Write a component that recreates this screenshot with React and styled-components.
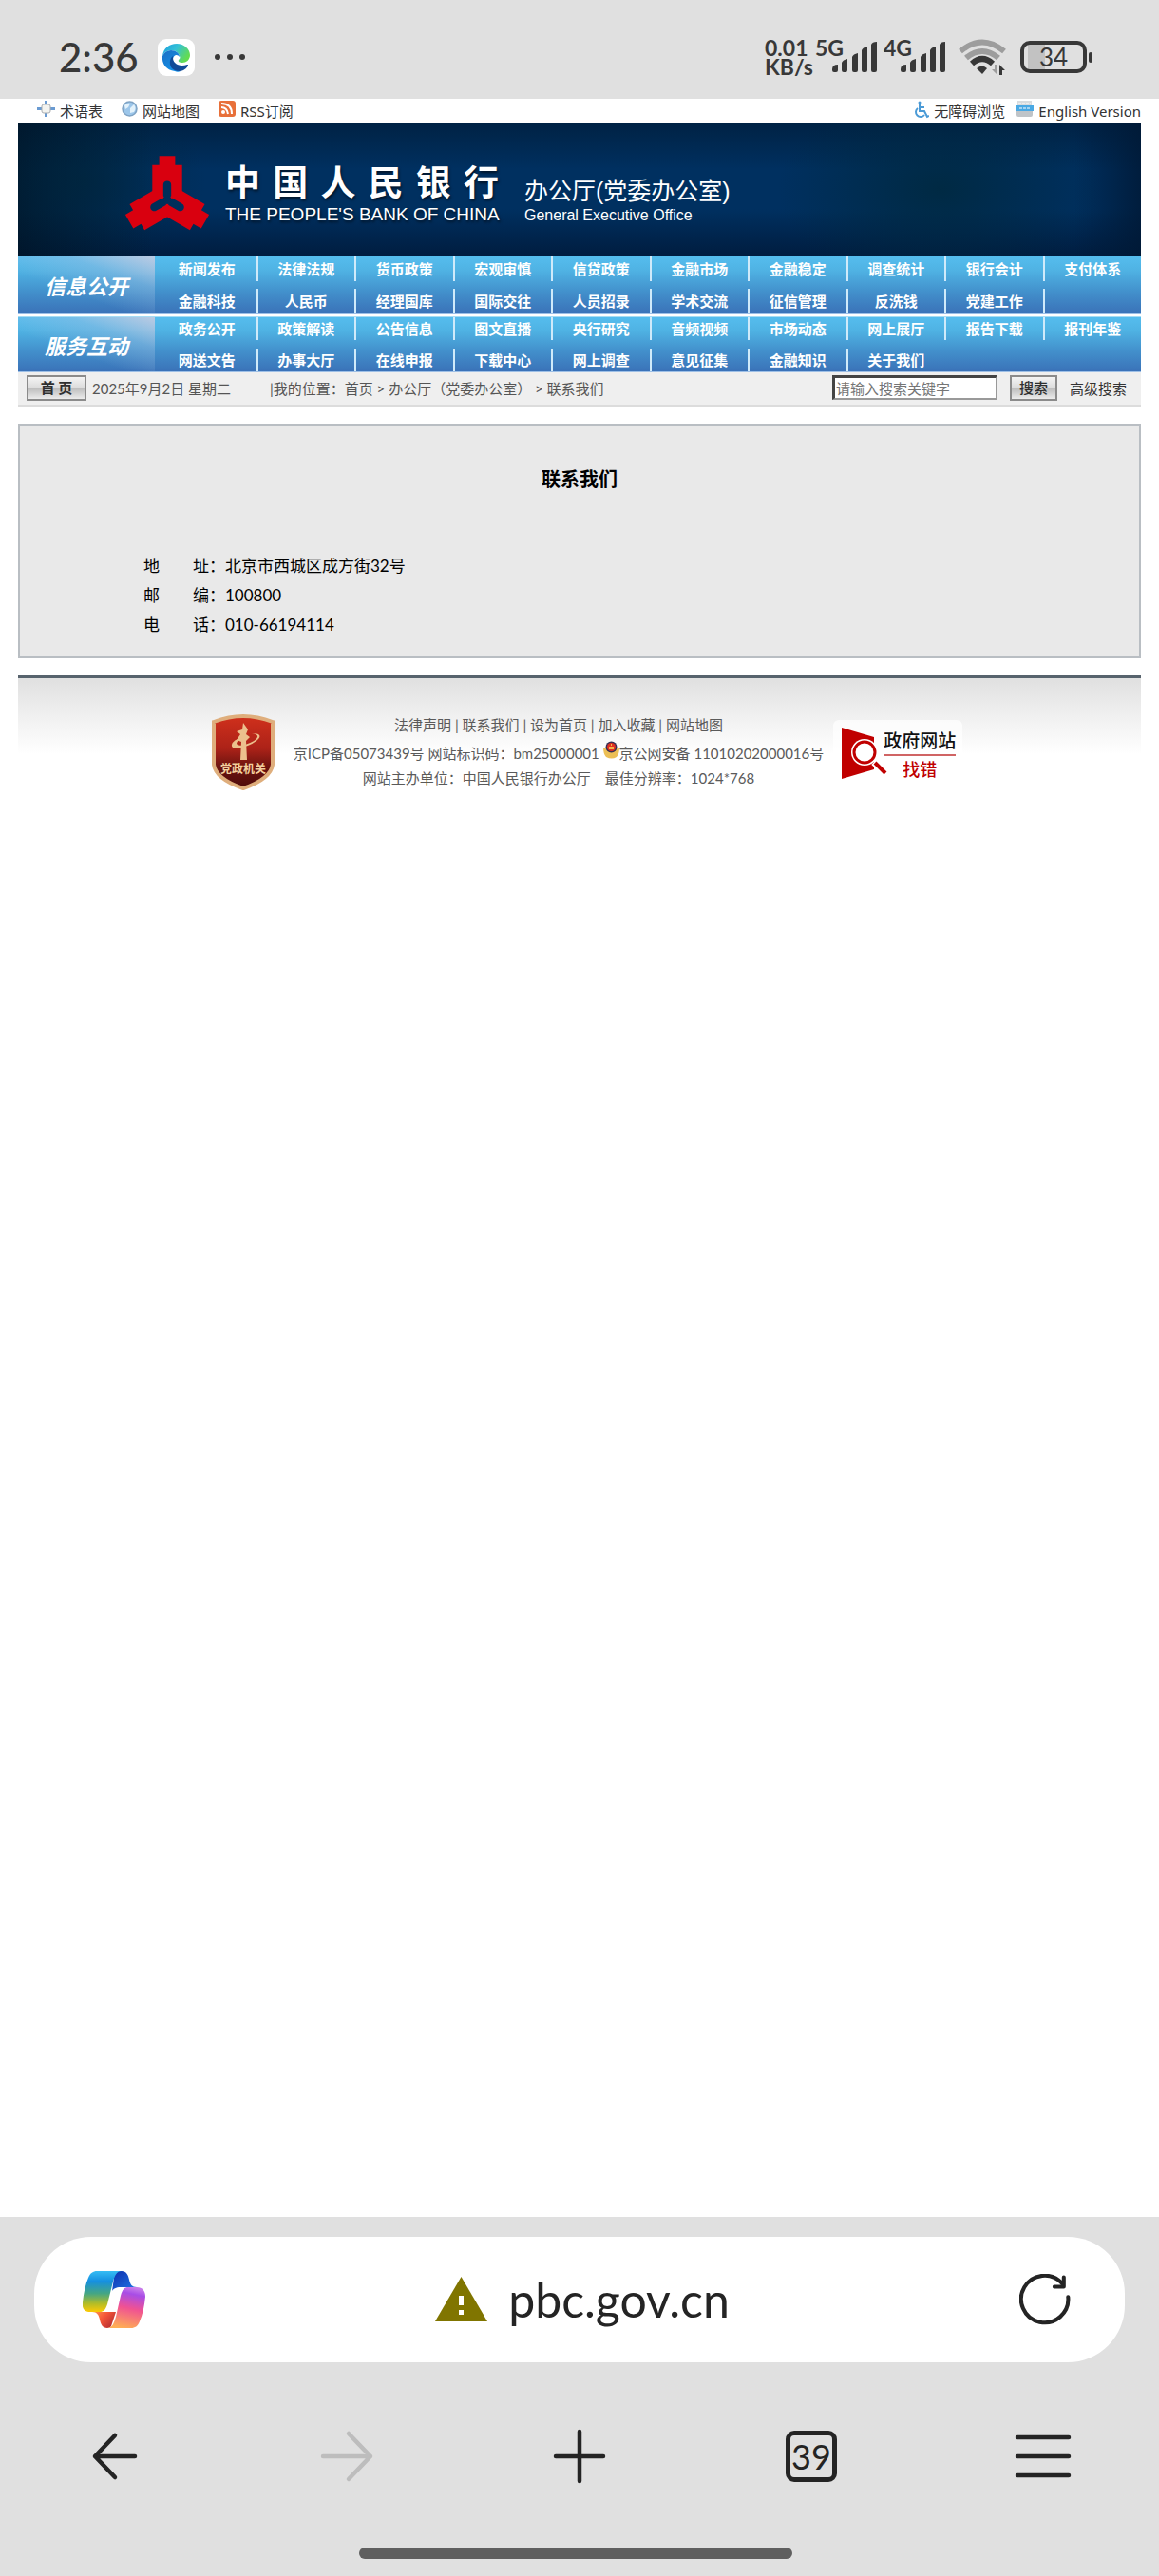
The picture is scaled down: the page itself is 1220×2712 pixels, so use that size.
import React from "react";
import styled, { createGlobalStyle } from "styled-components";

const GlobalStyle = createGlobalStyle`
  * { box-sizing: border-box; }
  body {
    margin: 0;
    background: #fff;
    color: #333;
    font-family: Lato, "Noto Sans CJK SC", sans-serif;
    font-size: 15px;
  }
  a { color: inherit; text-decoration: none; }
  ul, dl, dd, h1, h2, p { margin: 0; padding: 0; list-style: none; }
  button, input { font: inherit; color: inherit; }
  svg { display: block; flex: none; }
`;

const Screen = styled.div`
  min-height: 100vh;
  display: flex;
  flex-direction: column;
`;

/* ---------- phone status bar ---------- */

const StatusBar = styled.header`
  height: 104px;
  padding: 16px 70px 0 62px;
  background: #e0e0e0;
  color: #383838;
  display: flex;
  align-items: center;
  justify-content: space-between;
`;

const StatusGroup = styled.div`
  display: flex;
  align-items: center;
  gap: ${(p) => p.$gap || 0}px;
`;

const Clock = styled.span`
  font-size: 42px;
  line-height: 44px;
  font-weight: 500;
`;

const NetText = styled.span`
  width: ${(p) => p.$width}px;
  height: 40px;
  font-size: 23px;
  line-height: 20px;
  font-weight: 700;
  white-space: nowrap;
`;

const NetLine = styled.span`
  display: block;
`;

const Battery = styled.div`
  width: 70px;
  height: 34px;
  margin-left: 14px;
  border: 4px solid #383838;
  border-radius: 10px;
  background: linear-gradient(to right, transparent 4px, #c2c2c2 4px, #c2c2c2 22px, transparent 22px);
  display: flex;
  align-items: center;
  justify-content: center;
  font-size: 26px;
  line-height: 26px;
`;

const BatteryNub = styled.div`
  width: 4px;
  height: 11px;
  margin-left: 2px;
  border-radius: 2px;
  background: #383838;
`;

/* ---------- site ---------- */

const Site = styled.main`
  flex: 1;
  padding: 0 19px;
`;

const TopLinks = styled.nav`
  height: 25px;
  padding-left: 20px;
  display: flex;
  align-items: flex-start;
  justify-content: space-between;
  font-family: "Noto Sans", "Noto Sans CJK SC", sans-serif;
`;

const LinkGroup = styled.div`
  display: flex;
  gap: ${(p) => p.$gap}px;
`;

const IconLink = styled.a`
  display: flex;
  align-items: flex-start;
  gap: 5px;
  line-height: 26px;
  height: 25px;
  svg { margin-top: 2px; }
`;

const Banner = styled.div`
  height: 140px;
  padding: 35px 0 0 112px;
  display: flex;
  align-items: flex-start;
  color: #fff;
  background:
    radial-gradient(ellipse 130px 90px at 68px 62px, rgba(0, 38, 58, 0.6), transparent),
    radial-gradient(ellipse 170px 110px at 970px 70px, rgba(0, 40, 60, 0.8), transparent),
    linear-gradient(to right, rgba(0, 20, 38, 0.8), transparent 12%, transparent 94%, rgba(0, 24, 52, 0.8)),
    linear-gradient(to bottom, #002244, #003060 35%, #003060 65%, #001d40);
`;

const BankName = styled.div`
  width: 288px;
  margin-left: 16px;
`;

const BankChinese = styled.h1`
  display: flex;
  justify-content: space-between;
  font-family: "Noto Sans CJK SC", sans-serif;
  font-size: 37px;
  line-height: 52px;
  font-weight: 700;
  text-shadow: 1px 2px 3px rgba(0, 0, 0, 0.6);
`;

const BankEnglish = styled.p`
  font-family: "Liberation Sans", sans-serif;
  font-size: 19px;
  line-height: 20px;
  white-space: nowrap;
  text-shadow: 1px 2px 3px rgba(0, 0, 0, 0.6);
`;

const Office = styled.div`
  margin: 21px 0 0 27px;
  font-family: "Liberation Sans", "Noto Sans CJK SC", sans-serif;
`;

const OfficeChinese = styled.p`
  font-size: 25px;
  line-height: 32px;
`;

const OfficeEnglish = styled.p`
  font-size: 16px;
  line-height: 20px;
`;

const NavBand = styled.nav`
  height: ${(p) => p.$height}px;
  border-top: 1px solid #a5dcf5;
  border-bottom: 1px solid #9dbfe6;
  margin-bottom: ${(p) => p.$after || 0}px;
  display: flex;
  color: #fff;
  font-weight: 700;
  background: linear-gradient(to bottom, #55bdee, #4fb2e3 25%, #4392cd 60%, #3a72b8);
`;

const NavTitle = styled.h2`
  width: 144px;
  display: flex;
  align-items: center;
  justify-content: center;
  font-size: 22px;
  font-style: italic;
  background: linear-gradient(200deg, rgba(205, 205, 225, 0.85), rgba(160, 190, 225, 0.4) 30%, transparent 62%);
`;

const NavGrid = styled.ul`
  flex: 1;
  margin-left: 3px;
  display: grid;
  grid-template-columns: repeat(10, 1fr);
  align-content: space-between;
`;

const NavCell = styled.li`
  height: ${(p) => p.$height}px;
  border-left: ${(p) => (p.$divider ? "2px solid #cfeafa" : "0")};
  display: flex;
  align-items: center;
  justify-content: center;
  line-height: 24px;
`;

const ToolBar = styled.div`
  height: 36px;
  padding: 0 15px 2px 9px;
  background: #efefef;
  border-bottom: 2px solid #dcdcdc;
  display: flex;
  align-items: center;
  color: #555;
  white-space: nowrap;
`;

const SilverButton = styled.button`
  width: ${(p) => p.$width}px;
  height: 27px;
  padding: 0;
  border: 2px solid #8b8b8b;
  border-radius: 0;
  background: linear-gradient(to bottom, #f4f4f4, #dcdcdc 48%, #bdbdbd 52%, #ececec);
  color: #2f2f2f;
  line-height: 20px;
  font-weight: ${(p) => (p.$bold ? 700 : 500)};
`;

const DateText = styled.span`
  width: 187px;
  margin-left: 6px;
`;

const Crumbs = styled.span`
  flex: 1;
`;

const SearchForm = styled.form`
  display: flex;
  align-items: center;
  gap: 13px;
  color: #333;
`;

const SearchInput = styled.input`
  width: 174px;
  height: 26px;
  padding: 0 1px;
  border: solid;
  border-width: 3px 2px 2px 3px;
  border-color: #444 #999 #999 #444;
  border-radius: 0;
  background: #fff;
  &::placeholder { color: #757575; opacity: 1; }
`;

const Panel = styled.section`
  height: 247px;
  margin-top: 18px;
  padding: 42px 0 0 130px;
  background: #e9e9e9;
  border: 2px solid #b9bec3;
  color: #000;
`;

const PanelTitle = styled.h2`
  margin: 0 0 62px -130px;
  text-align: center;
  font-size: 20px;
  line-height: 28px;
`;

const Details = styled.dl`
  display: grid;
  grid-template-columns: 86px 1fr;
  font-size: 17px;
  line-height: 31px;
`;

const Term = styled.dt`
  display: flex;
  justify-content: space-between;
`;

const Footer = styled.footer`
  height: 130px;
  margin-top: 18px;
  padding: 32px 0 0 16px;
  border-top: 3px solid #57636d;
  background: linear-gradient(to bottom, #e0e0e0, #f2f2f2 45px, #fff 80px);
  display: flex;
  justify-content: center;
  align-items: flex-start;
  color: #5a5a5a;
`;

const ShieldSlot = styled.div`
  padding-top: 6px;
`;

const FooterText = styled.div`
  margin: 4px 10px 0 20px;
  text-align: center;
  white-space: nowrap;
`;

const FooterLine = styled.p`
  height: ${(p) => p.$height || 26}px;
  line-height: 26px;
  display: flex;
  justify-content: center;
  white-space: pre;
`;

const ReportLink = styled.a`
  width: 136px;
  height: 80px;
  margin-top: 12px;
  padding: 8px 0 0 9px;
  border-radius: 6px;
  background: rgba(255, 255, 255, 0.7);
  display: flex;
`;

const ReportText = styled.span`
  display: flex;
  flex-direction: column;
  align-items: center;
  margin-left: -8px;
  font-size: 19px;
  line-height: 28px;
  font-weight: 500;
  color: #111;
`;

const ReportRed = styled.span`
  width: 76px;
  border-top: 2px solid #d06464;
  color: #c00000;
  text-align: center;
  font-size: 18px;
`;

/* ---------- browser chrome ---------- */

const Chrome = styled.footer`
  height: 378px;
  padding: 21px 36px 18px;
  background: #e0e0e0;
  color: #242424;
  display: flex;
  flex-direction: column;
`;

const AddressBar = styled.div`
  height: 132px;
  padding: 0 57px 0 51px;
  border-radius: 60px;
  background: #fff;
  display: flex;
  align-items: center;
  justify-content: space-between;
`;

const PlainButton = styled.button`
  padding: 0;
  border: 0;
  background: none;
  display: flex;
  align-items: center;
  justify-content: center;
`;

const Address = styled.a`
  display: flex;
  align-items: center;
  gap: 22px;
  font-size: 50px;
  line-height: 64px;
`;

const Controls = styled.nav`
  height: 196px;
  margin: 0 -36px;
  padding-top: 3px;
  display: grid;
  grid-template-columns: repeat(5, 1fr);
`;

const TabCount = styled.span`
  width: 54px;
  height: 54px;
  border: 5px solid #242424;
  border-radius: 9px;
  font-size: 36px;
  line-height: 44px;
  text-align: center;
`;

const GestureArea = styled.div`
  padding-right: 8px;
  display: flex;
  justify-content: center;
`;

const GestureBar = styled.div`
  width: 456px;
  height: 12px;
  border-radius: 6px;
  background: #5f5f5f;
`;

/* ---------- drawings ---------- */

const EdgeIcon = () => (
  <svg width="39" height="39" viewBox="0 0 39 39" aria-hidden="true">
    <defs>
      <linearGradient id="edgeTop" x1="0" y1="0" x2="1" y2="0.5">
        <stop offset="0" stopColor="#1b9de0" />
        <stop offset="0.5" stopColor="#35c1d6" />
        <stop offset="1" stopColor="#63dc50" />
      </linearGradient>
      <linearGradient id="edgeLeft" x1="0" y1="0" x2="0.6" y2="1">
        <stop offset="0" stopColor="#1a6fc4" />
        <stop offset="1" stopColor="#1490e8" />
      </linearGradient>
    </defs>
    <rect width="39" height="39" rx="9" fill="#fff" />
    <path d="M5 18C6 10 12 5 20 5c8 0 14 6 14 12 0 5-4 8-8 8-3 0-5-1-4-3 1-1 2-2 1-4-1-4-5-6-9-6-4 0-7 2-9 6Z" fill="url(#edgeTop)" />
    <path d="M5 18c2-4 5-6 9-6 5 0 9 3 9 7-2-3-6-3-7 2-1 6 4 13 8 13-2 1-4 1-6 0C9 33 4 26 5 18Z" fill="url(#edgeLeft)" />
    <path d="M16 18c-4 3-4 9-1 13 3 3 8 4 12 2 2-1 4-3 5-5 0-1 0-1-1-1-8 3-16-1-15-9Z" fill="#114a98" />
  </svg>
);

const Dots = () => (
  <svg width="34" height="8" viewBox="0 0 34 8" fill="#383838" aria-hidden="true">
    <circle cx="4" cy="4" r="3" />
    <circle cx="17" cy="4" r="3" />
    <circle cx="30" cy="4" r="3" />
  </svg>
);

const Overlap = styled.span`
  margin: 0 ${(p) => p.$after}px 0 -14px;
`;

const Signal = ({ after }) => (
  <Overlap $after={after}>
    <svg width="49" height="34" viewBox="0 0 49 34" fill="#383838" aria-hidden="true">
      <path d="M1 30q0-5 6-5v6q0 2-2 2H3q-2 0-2-2ZM11 23q1-3 6-4v12q0 2-2 2h-2q-2 0-2-2ZM22 17q1-3 6-4v18q0 2-2 2h-2q-2 0-2-2ZM32 10q1-3 6-4v25q0 2-2 2h-2q-2 0-2-2ZM42 4q1-3 6-3v30q0 2-2 2h-2q-2 0-2-2Z" />
    </svg>
  </Overlap>
);

const Wifi = () => (
  <svg width="52" height="38" viewBox="0 0 52 38" fill="none" aria-hidden="true">
    <path d="M3 13Q26-6 49 13" stroke="#9d9d9d" strokeWidth="6" />
    <path d="M9 20Q26 6 43 20" stroke="#9d9d9d" strokeWidth="6" />
    <path d="M15 26Q26 16 37 26" stroke="#383838" strokeWidth="6" />
    <path d="M20 31q6-5 11 0l-5 6Z" fill="#383838" />
    <path d="M42 27v11l-6-6h3v-5Z" fill="#9d9d9d" />
    <path d="M44 38V27l6 6h-3v5Z" fill="#383838" />
  </svg>
);

const CrossIcon = () => (
  <svg width="19" height="17" viewBox="0 0 19 17" aria-hidden="true">
    <path d="M9.500 0v17M0 8.500h19" stroke="#6a9bd2" strokeWidth="3" />
    <rect x="5" y="4" width="9" height="9" rx="2" fill="#f4f4f0" stroke="#a9adb0" />
  </svg>
);

const GlobeIcon = () => (
  <svg width="17" height="17" viewBox="0 0 17 17" aria-hidden="true">
    <circle cx="8.500" cy="8.500" r="7.500" fill="#9cc6ea" stroke="#7fa3c4" strokeWidth="1.500" />
    <path d="M3 5q3-3 6-2l-2 4-3 2ZM9 8l4-4q3 4 0 8l-4 1Z" fill="#e3f2fb" />
  </svg>
);

const RssIcon = () => (
  <svg width="18" height="17" viewBox="0 0 18 17" aria-hidden="true">
    <rect width="18" height="17" rx="3" fill="#e8703a" />
    <circle cx="5" cy="12" r="2" fill="#fff" />
    <path d="M3 7q6 0 7 7M3 3q11 0 11 11" stroke="#fff" strokeWidth="2" fill="none" />
  </svg>
);

const WheelchairIcon = () => (
  <svg width="17" height="19" viewBox="0 0 17 19" fill="none" stroke="#4a9ad6" strokeWidth="2" aria-hidden="true">
    <circle cx="7" cy="2" r="1.500" fill="#4a9ad6" stroke="none" />
    <path d="M7 4v7h5l3 6 2-1M7 7h5" />
    <path d="M5 8a5 5 0 1 0 7 7" />
  </svg>
);

const KeyboardIcon = () => (
  <svg width="19" height="17" viewBox="0 0 19 17" aria-hidden="true">
    <path d="M2 0h15v6H2Z" fill="#d9dcde" />
    <path d="M0 5h19v6H0Z" fill="#4aa9e4" />
    <path d="M1 11h17v4q0 2-2 2H3q-2 0-2-2Z" fill="#bfc4c8" />
    <path d="M3 3h13M4 8h11" stroke="#fff" strokeWidth="1" strokeDasharray="3 1" />
  </svg>
);

const petal = "M-8-44H8V-35H15V-7L4-1V-15A4 4 0 0 0-4-15V-1L-15-7V-35H-8Z";

const BankLogo = () => (
  <svg width="90" height="80" viewBox="-43 -44 86 76" fill="#d9000f" aria-hidden="true">
    <path d={petal} />
    <path d={petal} transform="rotate(120)" />
    <path d={petal} transform="rotate(240)" />
  </svg>
);

const PartyShield = () => (
  <svg width="66" height="80" viewBox="0 0 66 80" role="img" aria-label="党政机关">
    <defs>
      <linearGradient id="shield" x1="0" y1="0" x2="0" y2="1">
        <stop offset="0" stopColor="#d0301c" />
        <stop offset="0.45" stopColor="#ac2218" />
        <stop offset="0.7" stopColor="#6d1410" />
        <stop offset="1" stopColor="#4d0a0a" />
      </linearGradient>
    </defs>
    <path d="M2 8Q18 2 33 2T64 8V53Q62 68 33 78Q4 68 2 53Z" fill="url(#shield)" stroke="#dfae7c" strokeWidth="4" />
    <path d="M30 48h7l-1-20 4-4-4-3 2-5-5-7-1 7-6 2 4 3-4 6 5 2Z" fill="#ecc08d" />
    <path d="M42 20q12 0 7 6-4 5-17 9-12 3-11-3 1-5 11-8-6 4-6 7 1 3 9 1 12-4 13-8 1-3-6-4Z" fill="#ecc08d" />
    <text x="33" y="62" textAnchor="middle" fontSize="12" fontWeight="700" fill="#f3cf9f" fontFamily="Noto Sans CJK SC, sans-serif">党政机关</text>
  </svg>
);

const PoliceBadge = () => (
  <svg width="17" height="19" viewBox="0 0 17 19" aria-hidden="true">
    <path d="M0 7l4 2h9l4-2q0 7-3 10-5 3-11 0Q0 14 0 7Z" fill="#ecbf55" />
    <circle cx="8.500" cy="6.500" r="6" fill="#3a2f52" />
    <circle cx="8.500" cy="6.500" r="4.500" fill="#e03020" />
    <path d="M6 6h5v3H6ZM8 3h1v2H8Z" fill="#f3b34a" />
  </svg>
);

const ReportMark = () => (
  <svg width="52" height="56" viewBox="0 0 52 56" aria-hidden="true">
    <path d="M0 0L34 10V44L0 54Z" fill="#c00000" />
    <circle cx="24" cy="26" r="14" fill="#fff" />
    <path d="M34 36l13 12" stroke="#fff" strokeWidth="8" />
    <circle cx="24" cy="26" r="11" fill="#fff" stroke="#c00000" strokeWidth="3" />
    <path d="M35 37l11 11" stroke="#c00000" strokeWidth="4" />
  </svg>
);

const CopilotIcon = () => (
  <svg width="66" height="60" viewBox="0 0 66 60" aria-hidden="true">
    <defs>
      <linearGradient id="ribbonA" x1="0" y1="0" x2="0" y2="1">
        <stop offset="0" stopColor="#36bdf4" />
        <stop offset="0.25" stopColor="#158fe0" />
        <stop offset="0.55" stopColor="#45a683" />
        <stop offset="0.8" stopColor="#b3bd27" />
        <stop offset="1" stopColor="#fdca05" />
      </linearGradient>
      <linearGradient id="ribbonB" x1="0.6" y1="0" x2="0.4" y2="1">
        <stop offset="0" stopColor="#c77bea" />
        <stop offset="0.15" stopColor="#a84de6" />
        <stop offset="0.5" stopColor="#f05292" />
        <stop offset="1" stopColor="#ffae55" />
      </linearGradient>
      <linearGradient id="ribbonC" x1="0" y1="0" x2="1" y2="1">
        <stop offset="0" stopColor="#0f2fae" />
        <stop offset="1" stopColor="#1f7ae8" />
      </linearGradient>
      <linearGradient id="ribbonD" x1="0" y1="0" x2="1" y2="0.6">
        <stop offset="0" stopColor="#ff9a4c" />
        <stop offset="0.5" stopColor="#f55638" />
        <stop offset="1" stopColor="#b92f33" />
      </linearGradient>
    </defs>
    <path d="M34 0h7c5 0 7 4 8 9 1 5 3 8 8 8H40c-5 0-8 2-9 4Z" fill="url(#ribbonC)" />
    <path d="M10 43h25l-5 15q-1 2-4 2c-5 0-7-4-8-9-1-5-3-8-8-8Z" fill="url(#ribbonD)" />
    <path d="M15 0h26c-5 0-7 4-9 11l-6 24c-2 6-4 8-8 8H8c-6 0-9-4-8-10C1 23 3 14 6 7c2-5 5-7 9-7Z" fill="url(#ribbonA)" />
    <path d="M51 60H26c5 0 7-5 9-12l5-22c2-7 4-9 8-9h9c6 0 9 4 9 10-1 10-3 19-6 26-2 5-5 7-9 7Z" fill="url(#ribbonB)" />
  </svg>
);

const WarningIcon = () => (
  <svg width="55" height="47" viewBox="0 0 55 47" aria-hidden="true">
    <path d="M27.500 0L55 47H0Z" fill="#807500" />
    <path d="M25 20h5v10h-5ZM25 35h5v5h-5Z" fill="#fff" />
  </svg>
);

const LineIcon = ({ d, size = 60, color = "#242424" }) => (
  <svg width={size} height={size} viewBox="0 0 60 60" fill="none" stroke={color} strokeWidth="4.500" strokeLinecap="round" strokeLinejoin="round" aria-hidden="true">
    <path d={d} />
  </svg>
);

/* ---------- content ---------- */

const openInfo = [
  "新闻发布", "法律法规", "货币政策", "宏观审慎", "信贷政策", "金融市场", "金融稳定", "调查统计", "银行会计", "支付体系",
  "金融科技", "人民币", "经理国库", "国际交往", "人员招录", "学术交流", "征信管理", "反洗钱", "党建工作", "",
];

const services = [
  "政务公开", "政策解读", "公告信息", "图文直播", "央行研究", "音频视频", "市场动态", "网上展厅", "报告下载", "报刊年鉴",
  "网送文告", "办事大厅", "在线申报", "下载中心", "网上调查", "意见征集", "金融知识", "关于我们",
];

const contacts = [
  ["地", "址：", "北京市西城区成方街32号"],
  ["邮", "编：", "100800"],
  ["电", "话：", "010-66194114"],
];

const footerLinks = ["法律声明", "联系我们", "设为首页", "加入收藏", "网站地图"];

const Band = ({ title, items, height, cell, after }) => (
  <NavBand $height={height} $after={after} aria-label={title}>
    <NavTitle>{title}</NavTitle>
    <NavGrid>
      {items.map((item, i) => (
        <NavCell key={i} $height={cell} $divider={i % 10 !== 0}>
          {item && <a href="#nav">{item}</a>}
        </NavCell>
      ))}
    </NavGrid>
  </NavBand>
);

export default function App() {
  return (
    <Screen>
      <GlobalStyle />
      <StatusBar>
        <StatusGroup $gap={20}>
          <Clock>2:36</Clock>
          <EdgeIcon />
          <Dots />
        </StatusGroup>
        <StatusGroup>
          <NetText $width={53}>
            <NetLine>0.01</NetLine>
            <NetLine>KB/s</NetLine>
          </NetText>
          <NetText $width={31}>5G</NetText>
          <Signal after={6} />
          <NetText $width={31}>4G</NetText>
          <Signal after={12} />
          <Wifi />
          <Battery>34</Battery>
          <BatteryNub />
        </StatusGroup>
      </StatusBar>

      <Site>
        <TopLinks>
          <LinkGroup $gap={20}>
            <IconLink href="#terms"><CrossIcon />术语表</IconLink>
            <IconLink href="#map"><GlobeIcon />网站地图</IconLink>
            <IconLink href="#rss"><RssIcon />RSS订阅</IconLink>
          </LinkGroup>
          <LinkGroup $gap={11}>
            <IconLink href="#access"><WheelchairIcon />无障碍浏览</IconLink>
            <IconLink href="#english"><KeyboardIcon />English Version</IconLink>
          </LinkGroup>
        </TopLinks>

        <Banner>
          <BankLogo />
          <BankName>
            <BankChinese>
              {[..."中国人民银行"].map((c) => <span key={c}>{c}</span>)}
            </BankChinese>
            <BankEnglish>THE PEOPLE'S BANK OF CHINA</BankEnglish>
          </BankName>
          <Office>
            <OfficeChinese>办公厅(党委办公室)</OfficeChinese>
            <OfficeEnglish>General Executive Office</OfficeEnglish>
          </Office>
        </Banner>

        <Band title="信息公开" items={openInfo} height={62} cell={26} after={2} />
        <Band title="服务互动" items={services} height={59} cell={24} />

        <ToolBar>
          <SilverButton type="button" $width={63} $bold>首 页</SilverButton>
          <DateText>2025年9月2日 星期二</DateText>
          <Crumbs>
            |我的位置：<a href="#home">首页</a> &gt; <a href="#office">办公厅（党委办公室）</a> &gt; <a href="#contact">联系我们</a>
          </Crumbs>
          <SearchForm>
            <SearchInput type="text" aria-label="搜索关键字" placeholder="请输入搜索关键字" />
            <SilverButton type="button" $width={50}>搜索</SilverButton>
            <a href="#advanced">高级搜索</a>
          </SearchForm>
        </ToolBar>

        <Panel>
          <PanelTitle>联系我们</PanelTitle>
          <Details>
            {contacts.map(([a, b, value]) => (
              <React.Fragment key={a}>
                <Term><span>{a}</span><span>{b}</span></Term>
                <dd>{value}</dd>
              </React.Fragment>
            ))}
          </Details>
        </Panel>

        <Footer>
          <ShieldSlot><PartyShield /></ShieldSlot>
          <FooterText>
            <FooterLine $height={30}>
              {footerLinks.map((label, i) => (
                <React.Fragment key={label}>
                  {i > 0 && " | "}
                  <a href="#footer">{label}</a>
                </React.Fragment>
              ))}
            </FooterLine>
            <FooterLine>京ICP备05073439号 网站标识码：bm25000001 <PoliceBadge />京公网安备 11010202000016号</FooterLine>
            <FooterLine>网站主办单位：中国人民银行办公厅　最佳分辨率：1024*768</FooterLine>
          </FooterText>
          <ReportLink href="#report">
            <ReportMark />
            <ReportText>
              <span>政府网站</span>
              <ReportRed>找错</ReportRed>
            </ReportText>
          </ReportLink>
        </Footer>
      </Site>

      <Chrome>
        <AddressBar>
          <PlainButton type="button" aria-label="Copilot"><CopilotIcon /></PlainButton>
          <Address href="#address"><WarningIcon />pbc.gov.cn</Address>
          <PlainButton type="button" aria-label="刷新">
            <LineIcon size={54} d="M57 27A27.500 27.500 0 1 1 50 11M52 4V15H41" />
          </PlainButton>
        </AddressBar>
        <Controls>
          <PlainButton type="button" aria-label="后退"><LineIcon d="M50 30H8M29 8L8 30L29 52" /></PlainButton>
          <PlainButton type="button" aria-label="前进"><LineIcon color="#bdbdbd" d="M4 30H54M31 6L54 30L31 54" /></PlainButton>
          <PlainButton type="button" aria-label="新建标签页"><LineIcon d="M30 4V56M5 30H55" /></PlainButton>
          <PlainButton type="button" aria-label="标签页"><TabCount>39</TabCount></PlainButton>
          <PlainButton type="button" aria-label="菜单"><LineIcon d="M3 10H57M3 30H57M3 50H57" /></PlainButton>
        </Controls>
        <GestureArea><GestureBar /></GestureArea>
      </Chrome>
    </Screen>
  );
}
